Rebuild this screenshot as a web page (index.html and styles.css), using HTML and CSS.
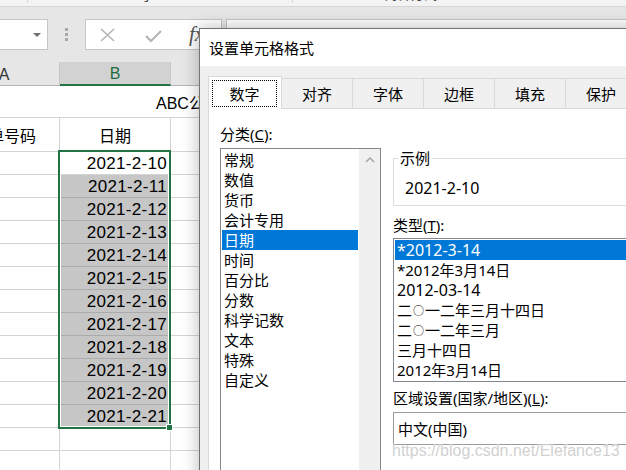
FILE: index.html
```html
<!DOCTYPE html>
<html lang="zh-CN">
<head>
<meta charset="utf-8">
<title>设置单元格格式</title>
<link rel="stylesheet" href="styles.css">
</head>
<body>
<div class="app">
  <div class="ribbon-edge">
    <span class="rg rg1"></span>
    <span class="rg rg2"><span class="frag f1">字</span></span>
    <span class="rg rg3"><span class="frag f2">对齐方式</span></span>
  </div>
  <div class="fbar">
    <div class="namebox"><svg class="dd" width="8" height="4" viewBox="0 0 8 4"><path d="M0 0H8L4 4Z"/></svg></div>
    <div class="grip"><i></i><i></i><i></i></div>
    <div class="fbtns">
      <svg class="ic-x" width="15" height="14" viewBox="0 0 15 14"><path d="M1 1L14 13M14 1L1 13"/></svg>
      <svg class="ic-ok" width="17" height="14" viewBox="0 0 17 14"><path d="M1 7L6 12L16 2"/></svg>
      <span class="fx">fx</span>
    </div>
    <div class="finput"></div>
  </div>
  <div class="sheet">
    <div class="ch">A</div><div class="ch on">B</div><div class="ch"></div>
    <div class="c title"><span class="tt">ABC公司</span></div>
    <div class="c hd">订单号码</div><div class="c hd">日期</div><div class="c"></div>
    <div class="c"></div><div class="c d">2021-2-10</div><div class="c"></div>
    <div class="c"></div><div class="c d g">2021-2-11</div><div class="c"></div>
    <div class="c"></div><div class="c d g">2021-2-12</div><div class="c"></div>
    <div class="c"></div><div class="c d g">2021-2-13</div><div class="c"></div>
    <div class="c"></div><div class="c d g">2021-2-14</div><div class="c"></div>
    <div class="c"></div><div class="c d g">2021-2-15</div><div class="c"></div>
    <div class="c"></div><div class="c d g">2021-2-16</div><div class="c"></div>
    <div class="c"></div><div class="c d g">2021-2-17</div><div class="c"></div>
    <div class="c"></div><div class="c d g">2021-2-18</div><div class="c"></div>
    <div class="c"></div><div class="c d g">2021-2-19</div><div class="c"></div>
    <div class="c"></div><div class="c d g">2021-2-20</div><div class="c"></div>
    <div class="c"></div><div class="c d g">2021-2-21</div><div class="c"></div>
    <div class="c"></div><div class="c"></div><div class="c"></div>
    <div class="c"></div><div class="c"></div><div class="c"></div>
  </div>
</div>

<div class="selbox"><span class="handle"></span></div>

<div class="dialog">
  <div class="dtitle">设置单元格格式</div>
  <div class="dbody">
    <div class="tabs">
      <div class="tab on"><span>数字</span></div>
      <div class="tab">对齐</div>
      <div class="tab">字体</div>
      <div class="tab">边框</div>
      <div class="tab">填充</div>
      <div class="tab">保护</div>
    </div>
    <div class="page">
      <div class="colL">
        <div class="lbl">分类(<u>C</u>):</div>
        <div class="list cat">
          <div class="items">
            <div class="it">常规</div>
            <div class="it">数值</div>
            <div class="it">货币</div>
            <div class="it">会计专用</div>
            <div class="it on">日期</div>
            <div class="it">时间</div>
            <div class="it">百分比</div>
            <div class="it">分数</div>
            <div class="it">科学记数</div>
            <div class="it">文本</div>
            <div class="it">特殊</div>
            <div class="it">自定义</div>
          </div>
          <div class="vscroll"><svg width="10" height="6" viewBox="0 0 10 6"><path d="M1 5L5 1L9 5"/></svg></div>
        </div>
      </div>
      <div class="colR">
        <fieldset class="sample"><legend>示例</legend><div class="sv num">2021-2-10</div></fieldset>
        <div class="lbl lt">类型(<u>T</u>):</div>
        <div class="list types">
          <div class="it on num">*2012-3-14</div>
          <div class="it">*2012年3月14日</div>
          <div class="it num">2012-03-14</div>
          <div class="it">二<span class="ling">○</span>一二年三月十四日</div>
          <div class="it">二<span class="ling">○</span>一二年三月</div>
          <div class="it">三月十四日</div>
          <div class="it">2012年3月14日</div>
        </div>
        <div class="lbl ll">区域设置(国家/地区)(<u>L</u>):</div>
        <div class="combo">中文(中国)</div>
      </div>
    </div>
  </div>
</div>

<div class="wm">https://blog.csdn.net/Elefance13</div>
</body>
</html>
```
FILE: styles.css
```css
* { box-sizing: border-box; }
html, body { margin: 0; }
body {
  width: 626px;
  height: 470px;
  overflow: hidden;
  position: relative;
  background: #fff;
  color: #000;
  font-family: "Noto Sans", "Noto Sans CJK SC", sans-serif;
}
.app { display: flex; flex-direction: column; height: 100%; }

.ribbon-edge {
  flex: none; height: 7px; background: #f3f3f3; border-bottom: 1px solid #d5d5d5;
  display: flex; overflow: hidden;
}
.rg { flex: none; height: 3px; overflow: hidden; border-right: 1px solid #d8d8d8; }
.rg1 { width: 28px; }
.rg2 { width: 265px; }
.rg3 { width: 333px; border-right: none; }
.frag { display: block; font-size: 15px; line-height: 15px; color: #444; white-space: nowrap; margin-top: -13px; }
.f1 { margin-left: 112px; }
.f2 { margin-left: 92px; font-size: 13px; }

.fbar { flex: none; height: 55px; padding: 12px 0; background: #e6e6e6; display: flex; }
.namebox {
  width: 49px; margin-left: -1px; background: #fff; border: 1px solid #c6c6c6;
  display: flex; align-items: center; justify-content: flex-end; padding-right: 6px;
}
.dd { fill: #6e6e6e; }
.grip { width: 37px; display: flex; flex-direction: column; align-items: center; justify-content: center; gap: 2px; }
.grip i { width: 3px; height: 3px; background: #a8a8a8; }
.fbtns {
  width: 137px; background: #fff; border: 1px solid #c6c6c6;
  display: flex; align-items: center; padding-left: 14px;
}
.ic-x { fill: none; stroke: #b5b5b5; stroke-width: 1.6; }
.ic-ok { fill: none; stroke: #b5b5b5; stroke-width: 2.2; margin-left: 30px; margin-top: 2px; }
.fx { margin-left: 27px; font-family: "Liberation Serif", serif; font-style: italic; font-size: 21px; color: #555; }
.finput { flex: 1; margin-left: 4px; background: #fff; border: 1px solid #c6c6c6; border-right: none; }

.sheet {
  flex: 1;
  margin-left: -51px;
  display: grid;
  grid-template-columns: 111px 111px 200px;
  grid-template-rows: 24px 32px 34px repeat(14, 23px);
  font-family: "Liberation Sans", "Noto Sans CJK SC", sans-serif;
  font-size: 16px;
}
.ch {
  background: #e6e6e6; border-right: 1px solid #c8c8c8; border-bottom: 1px solid #b4b4b4;
  display: flex; align-items: center; justify-content: center; padding-top: 2px; color: #333;
}
.ch.on { background: #d2d2d2; color: #1d6b40; border-bottom: 2px solid #217346; }
.c { border-right: 1px solid #d4d4d4; border-bottom: 1px solid #d4d4d4; background: #fff; display: flex; align-items: center; }
.title { grid-column: 1 / -1; border-right: none; padding-left: 207px; white-space: nowrap; }
.hd { justify-content: center; padding-top: 1px; }
.d { justify-content: flex-end; padding-right: 3px; font-size: 17px; letter-spacing: 0.3px; padding-top: 1px; }
.d.g { background: #c6c6c6; border-bottom-color: #acacac; }

.selbox {
  position: absolute; left: 58px; top: 150px; width: 113px; height: 279px;
  border: 2px solid #217346; box-shadow: inset 0 0 0 1px #fff;
}
.handle {
  position: absolute; left: 106px; top: 272px; width: 7px; height: 7px;
  background: #217346; border: 1px solid #fff;
}

.dialog {
  position: absolute; left: 199px; top: 28px; width: 470px; height: 460px;
  border: 1px solid #737373; background: #f0f0f0;
  box-shadow: 0 0 16px rgba(0, 0, 0, 0.28);
  display: flex; flex-direction: column; overflow: hidden;
  font-size: 15px;
}
.dtitle { flex: none; height: 37px; background: #fff; display: flex; align-items: center; padding-left: 9px; }
.dbody { flex: 1; display: flex; flex-direction: column; padding: 10px 0 0 8px; }
.tabs { flex: none; display: flex; align-items: flex-end; height: 33px; margin-bottom: -1px; position: relative; z-index: 1; }
.tab {
  width: 72px; height: 31px; margin-left: -1px;
  border: 1px solid #d9d9d9; background: #f0f0f0;
  display: flex; align-items: center; justify-content: center;
}
.tab.on {
  width: 74px; height: 33px; margin-left: 0; background: #fff; border-bottom: none;
  padding: 3px 4px 2px 3px; align-items: stretch;
}
.tab.on span { flex: 1; border: 1px dotted #000; display: flex; align-items: center; justify-content: center; }

.page {
  flex: 1; background: #fff; border: 1px solid #d9d9d9; border-right: none;
  display: flex; gap: 12px; padding: 15px 0 0 11px;
}
.colL { width: 161px; flex: none; }
.colR { width: 260px; flex: none; padding-top: 24px; }
.lbl { height: 20px; line-height: 20px; white-space: nowrap; }
.list { border: 1px solid #828790; background: #fff; }
.cat { margin-top: 4px; height: 340px; display: flex; }
.items { flex: 1; padding: 1px; }
.it { height: 20px; line-height: 20px; padding-left: 2px; white-space: nowrap; }
.it.on { background: #0078d7; color: #fff; }
.num { font-size: 16px; }
.ling { font-size: 11px; vertical-align: 1px; padding: 0 1px; }
.vscroll { width: 21px; background: #f0f0f0; display: flex; justify-content: center; padding-top: 8px; }
.vscroll svg { fill: none; stroke: #a6a6a6; stroke-width: 1.5; }

.sample { margin: 0; padding: 10px 0 7px 4px; border: 1px solid #dcdcdc; min-width: 0; }
.sample legend { padding: 0 2px; line-height: 20px; }
.sv { margin-left: 7px; height: 20px; line-height: 20px; }
.lt { margin-top: 9px; }
.types { margin-top: 3px; padding: 1px; height: 144px; }
.ll { margin-top: 6px; }
.combo { margin-top: 4px; height: 33px; border: 1px solid #9a9a9a; display: flex; align-items: center; padding-left: 4px; }

.wm {
  position: absolute; left: 392px; top: 442px;
  font-family: "Liberation Sans", sans-serif; font-size: 16px;
  color: rgba(200, 200, 200, 0.85);
  text-shadow: 0 0 1px #fff;
  white-space: nowrap;
}
```
